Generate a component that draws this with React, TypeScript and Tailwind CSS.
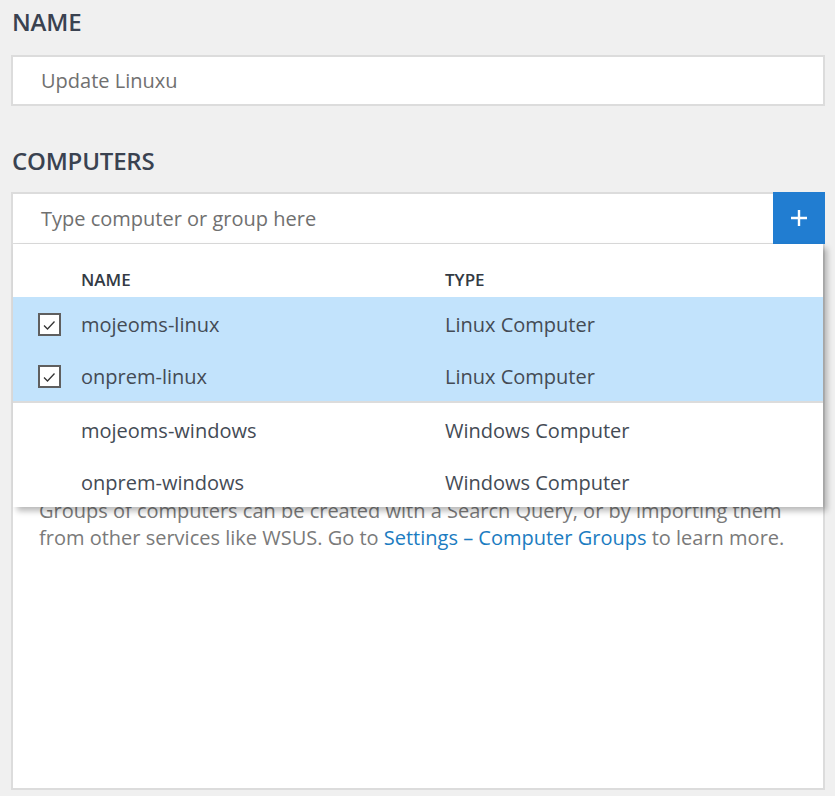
import React from "react";

interface Row {
  name: string;
  type: string;
  checked: boolean;
}

const rows: Row[] = [
  { name: "mojeoms-linux", type: "Linux Computer", checked: true },
  { name: "onprem-linux", type: "Linux Computer", checked: true },
  { name: "mojeoms-windows", type: "Windows Computer", checked: false },
  { name: "onprem-windows", type: "Windows Computer", checked: false },
];

const CheckBox: React.FC = () => (
  <span className="flex h-[23px] w-[23px] items-center justify-center border-2 border-[#5f5f5f] bg-white">
    <svg width="14" height="14" viewBox="0 0 14 14" fill="none">
      <path d="M2 7.5 L5.5 11 L12.5 3.5" stroke="#333" strokeWidth="1.3" />
    </svg>
  </span>
);

const App: React.FC = () => {
  return (
    <div
      className="min-h-screen bg-[#f0f0f0] pb-[6px] pl-[11px] pr-[10px] pt-[8px]"
      style={{ fontFamily: '"Open Sans", "Noto Sans", sans-serif' }}
    >
      <h2 className="pl-px text-[24px] font-semibold leading-[28px] tracking-[-0.2px] text-[#3a4250]">
        NAME
      </h2>
      <div className="mt-[19px] flex h-[51px] items-center border-2 border-[#dcdcdc] bg-white pl-[28px] text-[20px] text-[#707070]">
        Update Linuxu
      </div>

      <h2 className="mt-[41px] pl-px text-[24px] font-semibold leading-[28px] tracking-[-0.2px] text-[#3a4250]">
        COMPUTERS
      </h2>
      <div className="relative mt-[17px]">
        <div className="flex h-[52px]">
          <div className="flex flex-1 items-center border-2 border-b border-r-0 border-[#dcdcdc] bg-white pl-[28px] text-[20px] text-[#707070]">
            Type computer or group here
          </div>
          <button className="flex w-[52px] items-center justify-center bg-[#217dd1]">
            <svg width="18" height="18" viewBox="0 0 18 18">
              <path d="M9 1 V17 M1 9 H17" stroke="#fff" strokeWidth="2.4" />
            </svg>
          </button>
        </div>

        <div className="h-[546px] border-2 border-t-0 border-[#dcdcdc] bg-white pl-[26px] pt-[253px] text-[20px] leading-[27px] text-[#7a7a7a]">
          Groups of computers can be created with a Search Query, or by importing them
          <br />
          from other services like WSUS. Go to{" "}
          <span className="text-[#1b7cc1]">Settings – Computer Groups</span> to learn more.
        </div>

        <div className="absolute left-[2px] right-[2px] top-[52px] bg-white shadow-[4px_4px_6px_rgba(0,0,0,0.28)]">
          <div className="flex h-[53px] items-end pb-[5px] text-[17px] font-semibold text-[#333a44]">
            <span className="w-[432px] pl-[68px]">NAME</span>
            <span>TYPE</span>
          </div>
          {rows.map((row, i) => (
            <div
              key={row.name}
              className={`flex h-[52px] items-center pt-[3px] text-[20px] text-[#444b55] ${
                row.checked ? "bg-[#c2e3fc]" : "bg-white"
              } ${i === 2 ? "h-[54px] border-t-2 border-[#dcdcdc]" : ""}`}
            >
              <span className="flex w-[68px] justify-center pl-[4px]">{row.checked && <CheckBox />}</span>
              <span className="w-[364px]">{row.name}</span>
              <span>{row.type}</span>
            </div>
          ))}
        </div>
      </div>
    </div>
  );
};

export default App;
